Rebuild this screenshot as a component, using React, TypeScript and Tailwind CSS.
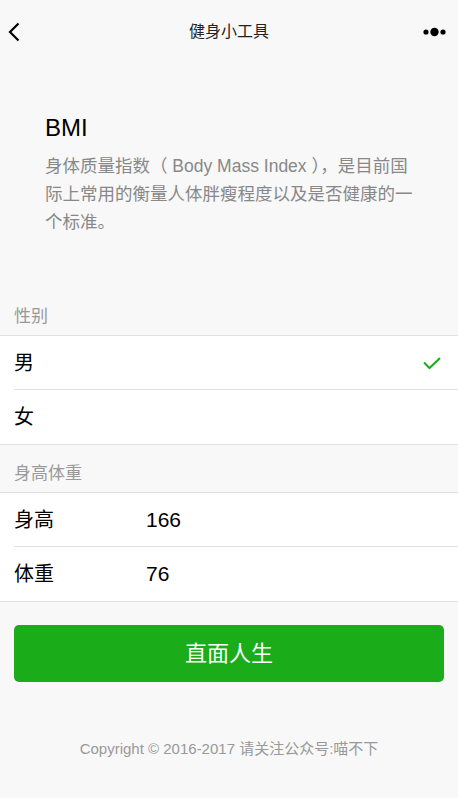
import React from "react";

const font = {
  fontFamily: '"Liberation Sans", "Noto Sans CJK SC", sans-serif',
};

function NavBar() {
  return (
    <div className="h-[64px] grid grid-cols-[1fr_auto_1fr] items-center px-[8px]">
      <svg width="12" height="20" viewBox="0 0 12 20" className="mt-[-1px]">
        <path d="M10.5 1.5 L2 10 L10.5 18.5" fill="none" stroke="#000" strokeWidth="2.2" />
      </svg>
      <div className="text-[16px] text-[#222]">健身小工具</div>
      <div className="flex justify-end">
        <svg width="24" height="10" viewBox="0 0 24 10" className="mr-[3px]">
          <circle cx="3" cy="5" r="2.6" fill="#000" />
          <circle cx="11.5" cy="5" r="4.2" fill="#000" />
          <circle cx="20" cy="5" r="2.6" fill="#000" />
        </svg>
      </div>
    </div>
  );
}

function Header() {
  return (
    <div className="px-[45px] pt-[50px] pb-[70px]">
      <h1 className="text-[24px] leading-[28px] text-black">BMI</h1>
      <p className="mt-[10px] text-[17.5px] leading-[28px] text-[#888]">
        身体质量指数（ Body Mass Index ），是目前国际上常用的衡量人体胖瘦程度以及是否健康的一个标准。
      </p>
    </div>
  );
}

function SectionTitle({ children }: { children: React.ReactNode }) {
  return (
    <div className="px-[14px] pb-[7px] text-[17px] leading-[22px] text-[#999]">
      {children}
    </div>
  );
}

function Cell({ children, last }: { children: React.ReactNode; last?: boolean }) {
  return (
    <div className="pl-[14px]">
      <div
        className={`h-[54px] flex items-center pr-[16px] ${
          last ? "" : "border-b border-[#e0e0e0]"
        }`}
      >
        {children}
      </div>
    </div>
  );
}

export default function App() {
  return (
    <div className="min-h-[798px] bg-[#f8f8f8]" style={font}>
      <NavBar />
      <Header />

      <SectionTitle>性别</SectionTitle>
      <div className="bg-white border-y border-[#e0e0e0]">
        <Cell>
          <span className="flex-1 text-[20px] text-black">男</span>
          <svg width="20" height="14" viewBox="0 0 20 14">
            <path d="M2 6.5 L7.5 12 L18 2" fill="none" stroke="#1aad19" strokeWidth="2" />
          </svg>
        </Cell>
        <Cell last>
          <span className="flex-1 text-[20px] text-black">女</span>
        </Cell>
      </div>

      <div className="pt-[18px]">
        <SectionTitle>身高体重</SectionTitle>
      </div>
      <div className="bg-white border-y border-[#e0e0e0]">
        <Cell>
          <span className="w-[132px] text-[20px] text-black">身高</span>
          <span className="text-[21px] text-black">166</span>
        </Cell>
        <Cell last>
          <span className="w-[132px] text-[20px] text-black">体重</span>
          <span className="text-[21px] text-black">76</span>
        </Cell>
      </div>

      <div className="px-[14px] pt-[23px]">
        <button className="w-full h-[57px] rounded-[5px] bg-[#1aad19] text-white text-[22px]">
          直面人生
        </button>
      </div>

      <div className="pt-[56px] text-center text-[15px] text-[#999]">
        Copyright © 2016-2017 请关注公众号:喵不下
      </div>
    </div>
  );
}
